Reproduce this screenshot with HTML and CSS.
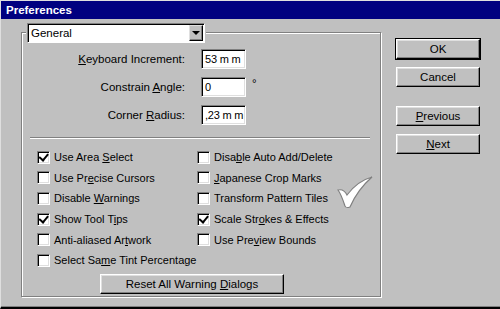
FILE: index.html
```html
<!DOCTYPE html>
<html lang="en">
<head>
  <meta charset="UTF-8">
  <title>Preferences</title>
  <link rel="stylesheet" href="styles.css">
</head>
<body>
  <div class="window">
    <div class="titlebar">Preferences</div>

    <div class="content">
      <div class="group">
        <div class="dropdown">
          <span class="dropdown-text">General</span>
          <span class="dropdown-btn"><span class="arrow"></span></span>
        </div>

        <div class="fields">
          <div class="field">
            <label class="field-label"><u>K</u>eyboard Increment:</label>
            <div class="input">53 m m</div>
          </div>
          <div class="field">
            <label class="field-label">Constrain <u>A</u>ngle:</label>
            <div class="input">0</div>
            <span class="degree">°</span>
          </div>
          <div class="field">
            <label class="field-label">Corner <u>R</u>adius:</label>
            <div class="input">,23 m m</div>
          </div>
        </div>

        <div class="separator"></div>

        <div class="checks">
          <div class="check"><span class="box checked"></span><span>Use Area <u>S</u>elect</span></div>
          <div class="check"><span class="box"></span><span>Disa<u>b</u>le Auto Add/Delete</span></div>
          <div class="check"><span class="box"></span><span>Use Pr<u>e</u>cise Cursors</span></div>
          <div class="check"><span class="box"></span><span><u>J</u>apanese Crop Marks</span></div>
          <div class="check"><span class="box"></span><span>Disable <u>W</u>arnings</span></div>
          <div class="check"><span class="box"></span><span>Transform Pattern Tiles</span></div>
          <div class="check"><span class="box checked"></span><span>Show Tool T<u>i</u>ps</span></div>
          <div class="check"><span class="box checked"></span><span>Scale Str<u>o</u>kes &amp; Effects</span></div>
          <div class="check"><span class="box"></span><span>Anti-aliased Ar<u>t</u>work</span></div>
          <div class="check"><span class="box"></span><span>Use Pre<u>v</u>iew Bounds</span></div>
          <div class="check wide"><span class="box"></span><span>Select Sa<u>m</u>e Tint Percentage</span></div>
        </div>

        <div class="reset-row">
          <button class="btn reset">Reset All Warning <u>D</u>ialogs</button>
        </div>

        <svg class="tick" width="40" height="34" viewBox="0 0 40 34">
          <path d="M2 14 C6 13 9 15 11 19 C17 11 25 4 36 1 C28 8 20 17 14 31 C11 32 10 32 9 30 C7 24 5 18 2 14 Z"
                fill="#fff" stroke="#808080" stroke-width="1.2"/>
        </svg>
      </div>

      <div class="side">
        <button class="btn default">OK</button>
        <button class="btn">Cancel</button>
        <button class="btn spaced"><u>P</u>revious</button>
        <button class="btn"><u>N</u>ext</button>
      </div>
    </div>
  </div>
</body>
</html>
```

FILE: styles.css
```css
body {
  margin: 0;
  font-family: "Liberation Sans", Arial, sans-serif;
  font-size: 11px;
  color: #000;
}
u {
  text-decoration: underline;
  text-underline-offset: 1px;
}
.window {
  width: 500px;
  height: 309px;
  box-sizing: border-box;
  background-color: #c0c0c0;
  border-top: 1px solid #dfdfdf;
  border-left: 1px solid #dfdfdf;
  border-bottom: 2px solid #000;
  box-shadow: inset 0 -1px 0 #808080;
  display: flex;
  flex-direction: column;
}
.titlebar {
  height: 18px;
  background-color: #000080;
  color: #fff;
  font-weight: bold;
  font-size: 11.5px;
  line-height: 18px;
  padding-left: 5px;
}
.content {
  display: flex;
  padding-top: 13px;
  padding-left: 20px;
}
.group {
  position: relative;
  width: 358px;
  height: 263px;
  border: 1px solid #808080;
  box-shadow: 1px 1px 0 #fff, inset 1px 1px 0 #fff;
}
.dropdown {
  display: flex;
  width: 178px;
  height: 20px;
  box-sizing: border-box;
  margin: -10px 0 0 5px;
  background-color: #fff;
  border: 1px solid;
  border-color: #808080 #fff #fff #808080;
  box-shadow: inset 1px 1px 0 #000, 0 0 0 1px #c0c0c0;
}
.dropdown-text {
  flex: 1;
  padding: 3px 0 0 3px;
  font-size: 11.5px;
}
.dropdown-btn {
  width: 14px;
  height: 16px;
  margin: 1px 1px 0 0;
  box-sizing: border-box;
  background-color: #c0c0c0;
  border: 1px solid;
  border-color: #dfdfdf #000 #000 #dfdfdf;
  box-shadow: inset -1px -1px 0 #808080;
  display: flex;
  align-items: center;
  justify-content: center;
}
.arrow {
  width: 0;
  height: 0;
  border-left: 4px solid transparent;
  border-right: 4px solid transparent;
  border-top: 4px solid #000;
}
.fields {
  display: flex;
  flex-direction: column;
  gap: 8px;
  margin-top: 6px;
}
.field {
  display: flex;
  align-items: center;
  font-size: 11.5px;
}
.field-label {
  width: 163px;
  text-align: right;
  margin-right: 16px;
}
.input {
  width: 45px;
  height: 20px;
  box-sizing: border-box;
  background-color: #fff;
  border: 1px solid;
  border-color: #808080 #fff #fff #808080;
  box-shadow: inset 1px 1px 0 #000, inset -1px -1px 0 #dfdfdf;
  padding: 3px 0 0 3px;
  font-size: 11px;
  letter-spacing: -0.2px;
  white-space: nowrap;
  overflow: hidden;
}
.degree {
  margin: -8px 0 0 6px;
}
.separator {
  margin: 12px 10px 0 8px;
  border-top: 1px solid #808080;
  border-bottom: 1px solid #fff;
}
.checks {
  display: grid;
  grid-template-columns: 160px 1fr;
  grid-auto-rows: 20.6px;
  margin: 8px 0 0 15px;
  font-size: 11px;
}
.check {
  display: flex;
  align-items: center;
  white-space: nowrap;
}
.check.wide {
  grid-column: 1 / 3;
}
.box {
  width: 13px;
  height: 13px;
  box-sizing: border-box;
  background-color: #fff;
  border: 1px solid;
  border-color: #808080 #fff #fff #808080;
  box-shadow: inset 1px 1px 0 #000, inset -1px -1px 0 #dfdfdf;
  margin-right: 4px;
  position: relative;
}
.box.checked::after {
  content: "";
  position: absolute;
  left: 2px;
  top: 0px;
  width: 4px;
  height: 7px;
  border: solid #000;
  border-width: 0 2px 2px 0;
  transform: rotate(40deg);
  transform-origin: 60% 60%;
}
.reset-row {
  margin: 3px 0 0 78px;
}
.btn {
  font-family: "Liberation Sans", Arial, sans-serif;
  font-size: 11.5px;
  color: #000;
  background-color: #c0c0c0;
  border: 1px solid;
  border-color: #fff #000 #000 #fff;
  box-shadow: inset -1px -1px 0 #808080, inset 1px 1px 0 #dfdfdf;
  padding: 0;
}
.reset {
  width: 184px;
  height: 20px;
}
.tick {
  position: absolute;
  left: 314px;
  top: 143px;
}
.side {
  display: flex;
  flex-direction: column;
  gap: 8px;
  margin: 7px 0 0 15px;
}
.side .btn {
  width: 84px;
  height: 20px;
}
.side .btn.default {
  outline: 1px solid #000;
  box-shadow: inset -1px -1px 0 #808080, inset 1px 1px 0 #dfdfdf;
}
.side .btn.spaced {
  margin-top: 11px;
}
```
